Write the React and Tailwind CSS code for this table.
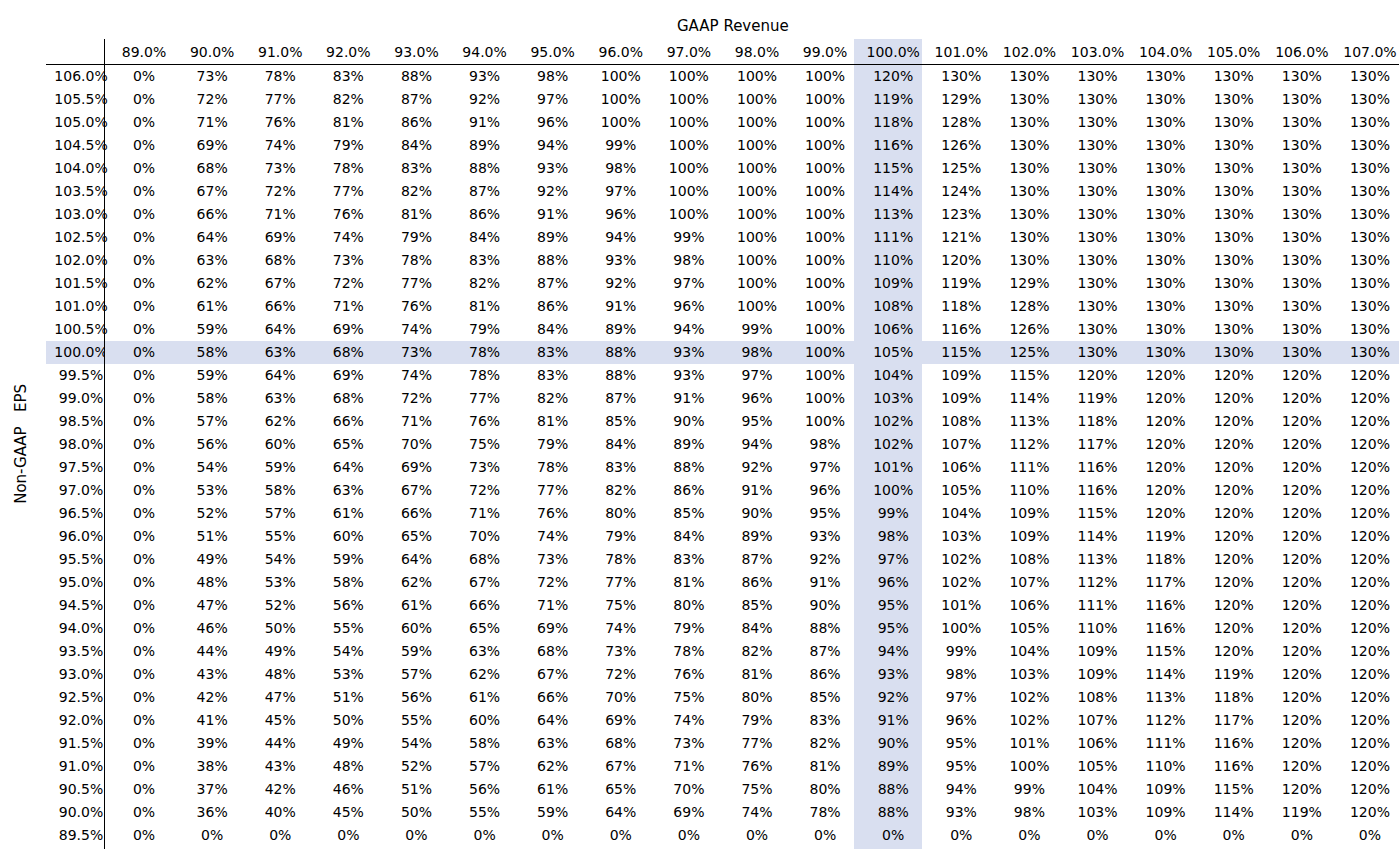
import React from "react";

const cols = ["89.0%","90.0%","91.0%","92.0%","93.0%","94.0%","95.0%","96.0%","97.0%","98.0%","99.0%","100.0%","101.0%","102.0%","103.0%","104.0%","105.0%","106.0%","107.0%"];

const raw = [
  ["106.0%", "0,73,78,83,88,93,98,100,100,100,100,120,130,130,130,130,130,130,130"],
  ["105.5%", "0,72,77,82,87,92,97,100,100,100,100,119,129,130,130,130,130,130,130"],
  ["105.0%", "0,71,76,81,86,91,96,100,100,100,100,118,128,130,130,130,130,130,130"],
  ["104.5%", "0,69,74,79,84,89,94,99,100,100,100,116,126,130,130,130,130,130,130"],
  ["104.0%", "0,68,73,78,83,88,93,98,100,100,100,115,125,130,130,130,130,130,130"],
  ["103.5%", "0,67,72,77,82,87,92,97,100,100,100,114,124,130,130,130,130,130,130"],
  ["103.0%", "0,66,71,76,81,86,91,96,100,100,100,113,123,130,130,130,130,130,130"],
  ["102.5%", "0,64,69,74,79,84,89,94,99,100,100,111,121,130,130,130,130,130,130"],
  ["102.0%", "0,63,68,73,78,83,88,93,98,100,100,110,120,130,130,130,130,130,130"],
  ["101.5%", "0,62,67,72,77,82,87,92,97,100,100,109,119,129,130,130,130,130,130"],
  ["101.0%", "0,61,66,71,76,81,86,91,96,100,100,108,118,128,130,130,130,130,130"],
  ["100.5%", "0,59,64,69,74,79,84,89,94,99,100,106,116,126,130,130,130,130,130"],
  ["100.0%", "0,58,63,68,73,78,83,88,93,98,100,105,115,125,130,130,130,130,130"],
  ["99.5%", "0,59,64,69,74,78,83,88,93,97,100,104,109,115,120,120,120,120,120"],
  ["99.0%", "0,58,63,68,72,77,82,87,91,96,100,103,109,114,119,120,120,120,120"],
  ["98.5%", "0,57,62,66,71,76,81,85,90,95,100,102,108,113,118,120,120,120,120"],
  ["98.0%", "0,56,60,65,70,75,79,84,89,94,98,102,107,112,117,120,120,120,120"],
  ["97.5%", "0,54,59,64,69,73,78,83,88,92,97,101,106,111,116,120,120,120,120"],
  ["97.0%", "0,53,58,63,67,72,77,82,86,91,96,100,105,110,116,120,120,120,120"],
  ["96.5%", "0,52,57,61,66,71,76,80,85,90,95,99,104,109,115,120,120,120,120"],
  ["96.0%", "0,51,55,60,65,70,74,79,84,89,93,98,103,109,114,119,120,120,120"],
  ["95.5%", "0,49,54,59,64,68,73,78,83,87,92,97,102,108,113,118,120,120,120"],
  ["95.0%", "0,48,53,58,62,67,72,77,81,86,91,96,102,107,112,117,120,120,120"],
  ["94.5%", "0,47,52,56,61,66,71,75,80,85,90,95,101,106,111,116,120,120,120"],
  ["94.0%", "0,46,50,55,60,65,69,74,79,84,88,95,100,105,110,116,120,120,120"],
  ["93.5%", "0,44,49,54,59,63,68,73,78,82,87,94,99,104,109,115,120,120,120"],
  ["93.0%", "0,43,48,53,57,62,67,72,76,81,86,93,98,103,109,114,119,120,120"],
  ["92.5%", "0,42,47,51,56,61,66,70,75,80,85,92,97,102,108,113,118,120,120"],
  ["92.0%", "0,41,45,50,55,60,64,69,74,79,83,91,96,102,107,112,117,120,120"],
  ["91.5%", "0,39,44,49,54,58,63,68,73,77,82,90,95,101,106,111,116,120,120"],
  ["91.0%", "0,38,43,48,52,57,62,67,71,76,81,89,95,100,105,110,116,120,120"],
  ["90.5%", "0,37,42,46,51,56,61,65,70,75,80,88,94,99,104,109,115,120,120"],
  ["90.0%", "0,36,40,45,50,55,59,64,69,74,78,88,93,98,103,109,114,119,120"],
  ["89.5%", "0,0,0,0,0,0,0,0,0,0,0,0,0,0,0,0,0,0,0"],
];

const rows = raw.map(([label, s]) => ({ label, values: s.split(",") }));
const HL_COL = 11;
const HL_ROW = "100.0%";

export default function App() {
  return (
    <div className="w-[1399px] h-[849px] bg-white text-black font-['DejaVu_Sans',sans-serif] text-[14px] flex overflow-hidden">
      <div className="w-[46px] shrink-0 pt-[39px] flex items-center justify-center pr-[4px]">
        <div className="[writing-mode:vertical-rl] rotate-180 whitespace-pre leading-[17px] text-[15px]">Non-GAAP   EPS</div>
      </div>
      <div className="flex-1 flex flex-col">
        <div className="h-[39px] pt-[18px] pl-[631px] leading-[16px] text-[15px] whitespace-pre">GAAP Revenue</div>
        <div className="grid grid-cols-[59px_repeat(19,minmax(0,1fr))] grid-rows-[26px_repeat(33,23px)_25px]">
          <div className="border-r border-b border-black" />
          {cols.map((c, i) => (
            <div
              key={c}
              className={`border-b border-black flex items-center justify-center pl-[10px] pt-[1px] whitespace-nowrap ${i === HL_COL ? "bg-[#d9dff0]" : ""}`}
            >
              {c}
            </div>
          ))}
          {rows.map((r, ri) => {
            const hlRow = r.label === HL_ROW;
            const last = ri === rows.length - 1;
            return (
              <React.Fragment key={r.label}>
                <div
                  className={`${last ? "pb-[2px]" : ""} border-r border-black flex items-center justify-center pl-[12px] whitespace-nowrap ${hlRow ? "bg-[#d9dff0]" : ""}`}
                >
                  {r.label}
                </div>
                {r.values.map((v, ci) => (
                  <div
                    key={ci}
                    className={`${last ? "pb-[2px]" : ""} flex items-center justify-center pl-[10px] whitespace-nowrap ${hlRow || ci === HL_COL ? "bg-[#d9dff0]" : ""}`}
                  >
                    {v}%
                  </div>
                ))}
              </React.Fragment>
            );
          })}
        </div>
      </div>
    </div>
  );
}
